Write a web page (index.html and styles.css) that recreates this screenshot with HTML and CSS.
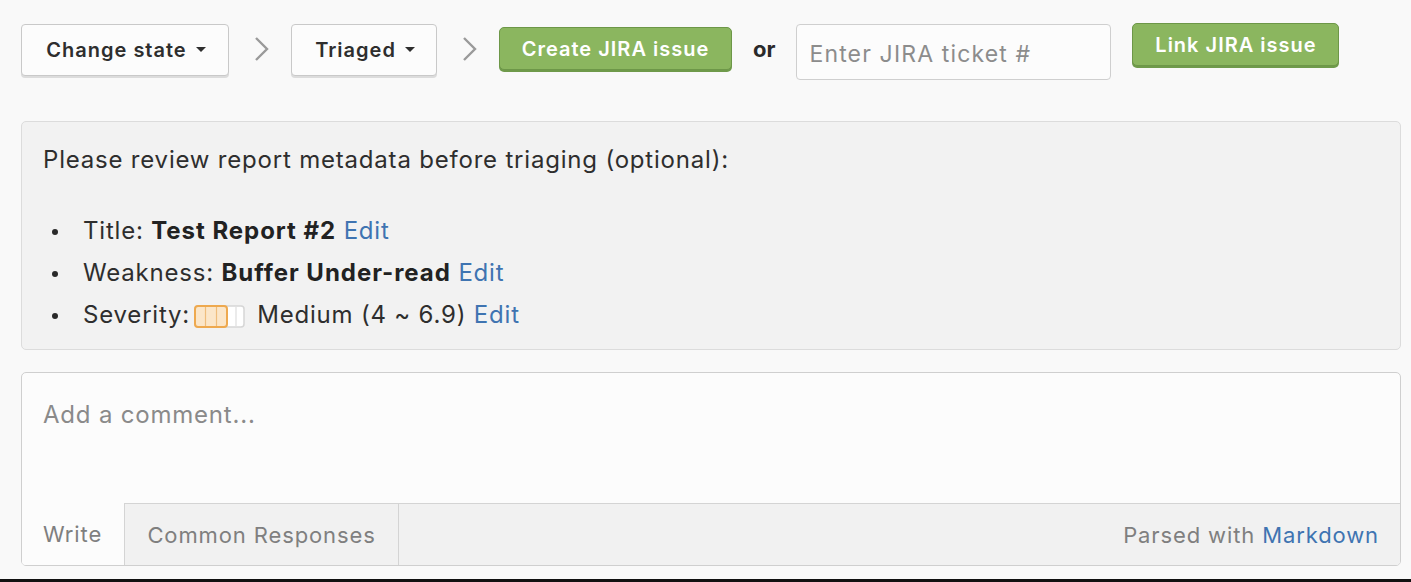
FILE: index.html
```html
<!DOCTYPE html>
<html lang="en">
<head>
<meta charset="utf-8">
<title>Triage</title>
<link rel="stylesheet" href="styles.css">
</head>
<body>
<div class="page">
  <div class="toolbar">
    <button class="dd dd-state">Change state <span class="caret"></span></button>
    <svg class="chev" width="17" height="26" viewBox="0 0 17 26"><polyline points="3,2 14,13 3,24" fill="none" stroke="#9a9a9a" stroke-width="2.4"/></svg>
    <button class="dd dd-triaged">Triaged <span class="caret"></span></button>
    <svg class="chev" width="17" height="26" viewBox="0 0 17 26"><polyline points="3,2 14,13 3,24" fill="none" stroke="#9a9a9a" stroke-width="2.4"/></svg>
    <button class="green create">Create JIRA issue</button>
    <span class="or">or</span>
    <input class="ticket" type="text" placeholder="Enter JIRA ticket #">
    <button class="green link">Link JIRA issue</button>
  </div>

  <div class="meta">
    <p class="meta-intro">Please review report metadata before triaging (optional):</p>
    <ul class="meta-list">
      <li>Title: <b>Test Report #2</b> <a href="#">Edit</a></li>
      <li>Weakness: <b>Buffer Under-read</b> <a href="#">Edit</a></li>
      <li>Severity: <svg class="sev" width="51" height="23" viewBox="0 0 51 23">
          <rect x="1" y="1" width="49" height="21" rx="3" fill="#fff" stroke="#d6d6d6" stroke-width="1.5"/>
          <rect x="1" y="1" width="32" height="21" rx="3" fill="#fbe6c9" stroke="#eea94f" stroke-width="2"/>
          <line x1="11.5" y1="2" x2="11.5" y2="21" stroke="#efbd7c" stroke-width="1.2"/>
          <line x1="22.5" y1="2" x2="22.5" y2="21" stroke="#efbd7c" stroke-width="1.2"/>
          <line x1="42" y1="2" x2="42" y2="21" stroke="#dedede" stroke-width="1.2"/>
        </svg> Medium (4 ~ 6.9) <a href="#">Edit</a></li>
    </ul>
  </div>

  <div class="comment">
    <div class="comment-input">Add a comment...</div>
    <div class="comment-foot">
      <span class="tab tab-write">Write</span>
      <span class="tab tab-common">Common Responses</span>
      <span class="parsed">Parsed with <a href="#">Markdown</a></span>
    </div>
  </div>
</div>
<div class="edge"></div>
</body>
</html>
```

FILE: styles.css
```css
html, body {
  margin: 0;
  padding: 0;
  background: #f9f9f9;
  font-family: Inter, "Liberation Sans", Arial, sans-serif;
  color: #333;
  letter-spacing: 0.05em;
}

body {
  height: 582px;
  overflow: hidden;
  display: flex;
  flex-direction: column;
}

.page {
  padding: 0 10px 0 21px;
  flex: 1;
}

.toolbar {
  display: flex;
  align-items: flex-start;
  padding-top: 23px;
  height: 121px;
  box-sizing: border-box;
}

.dd {
  display: flex;
  align-items: center;
  justify-content: center;
  gap: 9px;
  margin-top: 1px;
  height: 52px;
  box-sizing: border-box;
  border: 1px solid #c9c9c9;
  border-radius: 4px;
  background: #fcfcfc;
  box-shadow: 0 2px 0 #dcdcdc;
  font-family: inherit;
  font-size: 20px;
  font-weight: 600;
  letter-spacing: 0.05em;
  color: #2e2e2e;
  padding: 0 0 0 2px;
}

.dd-state { width: 208px; }
.dd-triaged { width: 146px; }

.caret {
  width: 0;
  height: 0;
  border-left: 5px solid transparent;
  border-right: 5px solid transparent;
  border-top: 5px solid #2e2e2e;
  margin-top: -2px;
}

.chev {
  margin: 13px 21px 0 24px;
  flex: none;
}

.green {
  height: 43px;
  box-sizing: border-box;
  border: 1px solid #6d9748;
  border-radius: 5px;
  background: #8bb65f;
  box-shadow: 0 2px 0 #6f9a4b;
  color: #fff;
  font-family: inherit;
  font-size: 20px;
  font-weight: 600;
  letter-spacing: 0.05em;
  padding: 0;
}

.create { width: 233px; margin-top: 4px; }
.link { width: 207px; margin-top: 0; margin-left: 21px; }

.or {
  margin: 13px 21px 0 21px;
  font-size: 22px;
  font-weight: 700;
  color: #2a2a2a;
  line-height: 26px;
  letter-spacing: 0;
}

.ticket {
  width: 315px;
  height: 56px;
  margin-top: 1px;
  box-sizing: border-box;
  border: 1px solid #cfcfcf;
  border-radius: 4px;
  background: #fcfcfc;
  padding: 4px 12px 0;
  font-family: inherit;
  font-size: 23px;
  letter-spacing: 0.05em;
  color: #333;
}

.ticket::placeholder { color: #8c8c8c; }

.meta {
  width: 1380px;
  box-sizing: border-box;
  height: 229px;
  border: 1px solid #dcdcdc;
  border-radius: 5px;
  background: #f2f2f2;
  padding: 17px 21px 0;
  font-size: 24px;
  color: #2e2e2e;
}

.meta-intro {
  margin: 0;
  line-height: 42px;
}

.meta-list {
  margin: 29px 0 0;
  padding-left: 9px;
  list-style: none;
  line-height: 42px;
}

.meta-list li::before {
  content: "";
  display: inline-block;
  width: 6px;
  height: 6px;
  border-radius: 50%;
  background: #2a2a2a;
  margin-right: 25px;
  vertical-align: 4px;
}

.meta-list b { color: #222; font-weight: 700; letter-spacing: 0.04em; }

a {
  color: #3f74b1;
  text-decoration: none;
}

.sev {
  vertical-align: -5px;
  margin: 0 5px 0 -4px;
}

.comment {
  margin-top: 22px;
  width: 1380px;
  height: 194px;
  box-sizing: border-box;
  border: 1px solid #cfcfcf;
  border-radius: 5px;
  background: #fcfcfc;
  display: flex;
  flex-direction: column;
  overflow: hidden;
}

.comment-input {
  flex: 1;
  padding: 27px 21px 0;
  font-size: 24px;
  color: #8a8a8a;
}

.comment-foot {
  height: 62px;
  display: flex;
  align-items: stretch;
  background: #f1f1f1;
  font-size: 22px;
  letter-spacing: 0.04em;
  color: #7f7f7f;
}

.tab {
  display: flex;
  align-items: center;
  box-sizing: border-box;
}

.tab-write {
  width: 102px;
  padding-left: 21px;
  background: #fcfcfc;
}

.tab-common {
  width: 275px;
  justify-content: center;
  border-top: 1px solid #d4d4d4;
  border-left: 1px solid #d4d4d4;
  border-right: 1px solid #d4d4d4;
}

.parsed {
  flex: 1;
  display: flex;
  align-items: center;
  justify-content: flex-end;
  padding-right: 21px;
  border-top: 1px solid #d4d4d4;
  white-space: pre;
}

.edge {
  height: 3px;
  background: #111;
  flex: none;
}
```
